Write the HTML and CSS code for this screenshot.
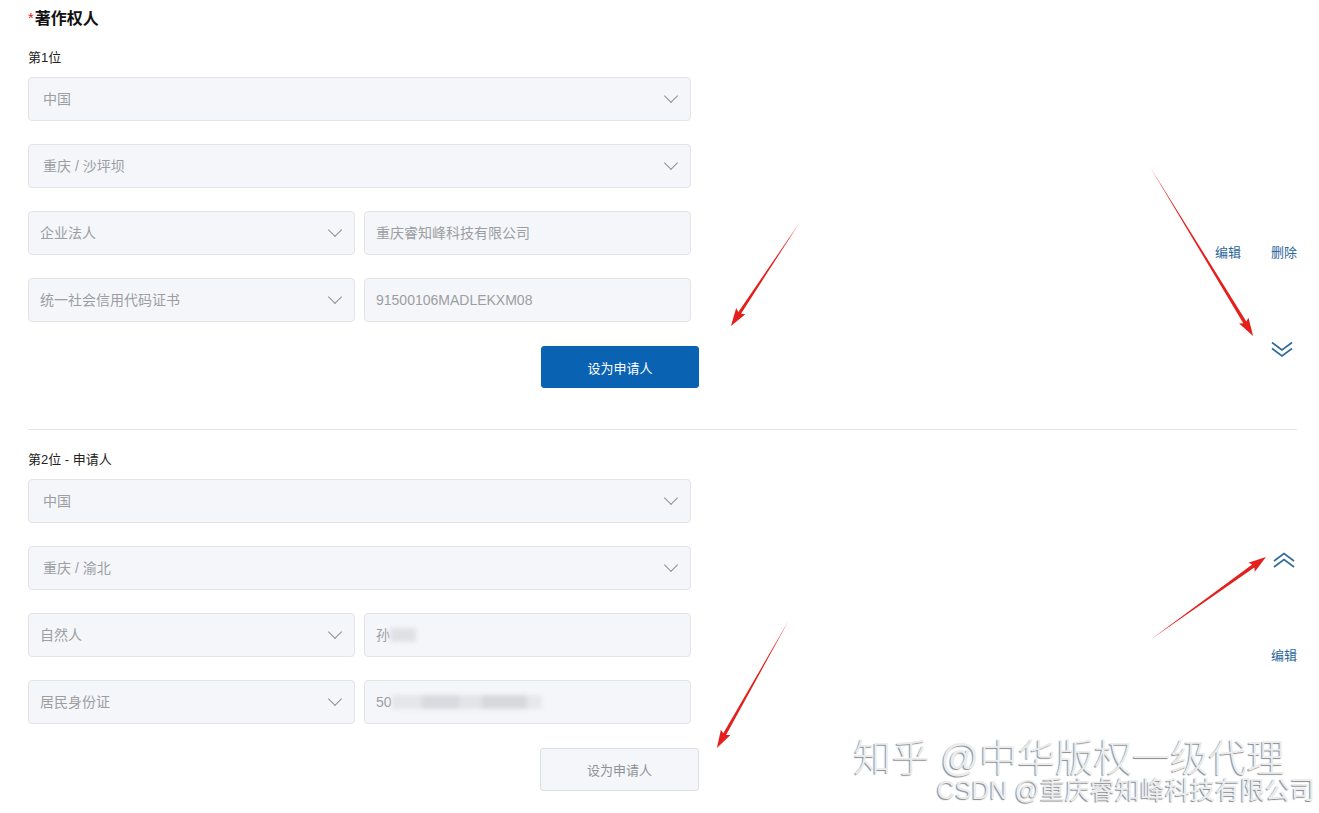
FILE: index.html
```html
<!DOCTYPE html>
<html lang="zh-CN">
<head>
    <meta charset="UTF-8">
    <title>著作权人</title>
    <link rel="stylesheet" href="styles.css">
</head>
<body>
<div class="page">
    <h2 class="title"><span class="req">*</span>著作权人</h2>

    <!-- 第1位 -->
    <div class="owner">
        <div class="form-col">
            <div class="pos-label">第1位</div>
            <div class="field select">中国<i class="caret"></i></div>
            <div class="field select">重庆 / 沙坪坝<i class="caret"></i></div>
            <div class="row">
                <div class="field select half">企业法人<i class="caret"></i></div>
                <div class="field half">重庆睿知峰科技有限公司</div>
            </div>
            <div class="row">
                <div class="field select half">统一社会信用代码证书<i class="caret"></i></div>
                <div class="field half">91500106MADLEKXM08</div>
            </div>
            <div class="btn-line">
                <button class="apply-btn">设为申请人</button>
            </div>
        </div>
        <div class="side-col side-1">
            <div class="actions">
                <a>编辑</a>
                <a>删除</a>
            </div>
            <svg class="chev chev-down" width="22" height="17" viewBox="0 0 22 17">
                <polyline points="1,1.5 11,9 21,1.5" fill="none" stroke="#2f6b9c" stroke-width="1.6"/>
                <polyline points="1,7.5 11,15 21,7.5" fill="none" stroke="#2f6b9c" stroke-width="1.6"/>
            </svg>
        </div>
    </div>

    <!-- 第2位 -->
    <div class="owner second">
        <div class="form-col">
            <div class="pos-label">第2位 - 申请人</div>
            <div class="field select">中国<i class="caret"></i></div>
            <div class="field select">重庆 / 渝北<i class="caret"></i></div>
            <div class="row">
                <div class="field select half">自然人<i class="caret"></i></div>
                <div class="field half">孙<span class="blur b1"></span></div>
            </div>
            <div class="row">
                <div class="field select half">居民身份证<i class="caret"></i></div>
                <div class="field half">50<span class="blur b2"></span></div>
            </div>
            <div class="btn-line">
                <button class="apply-btn disabled">设为申请人</button>
            </div>
        </div>
        <div class="side-col side-2">
            <svg class="chev chev-up" width="22" height="17" viewBox="0 0 22 17">
                <polyline points="1,9 11,1.5 21,9" fill="none" stroke="#2f6b9c" stroke-width="1.6"/>
                <polyline points="1,15 11,7.5 21,15" fill="none" stroke="#2f6b9c" stroke-width="1.6"/>
            </svg>
            <div class="actions">
                <a>编辑</a>
            </div>
        </div>
    </div>
</div>

<!-- 标注箭头 -->
<svg class="marks" width="1319" height="813" viewBox="0 0 1319 813">
    <g fill="#e4201c">
        <polygon transform="translate(800 222) rotate(123.6)" points="0,0 109,-1.6 107,-5.5 124.8,0 107,5.5 109,1.6"/>
        <polygon transform="translate(1150 167) rotate(58.6)" points="0,0 182,-1.8 180,-5.5 197.9,0 180,5.5 182,1.8"/>
        <polygon transform="translate(1150 640) rotate(-35.6)" points="0,0 127,-1.8 125,-5.5 142.6,0 125,5.5 127,1.8"/>
        <polygon transform="translate(789 620) rotate(119.4)" points="0,0 131,-1.6 129,-5.5 146.9,0 129,5.5 131,1.6"/>
    </g>
</svg>

<div class="watermark">
    <div class="wm-1">知乎 @中华版权一级代理</div>
    <div class="wm-2">CSDN @重庆睿知峰科技有限公司</div>
</div>
</body>
</html>
```

FILE: styles.css
```css
body {
    margin: 0;
    font-family: "Liberation Sans", "Noto Sans CJK SC", sans-serif;
    background: #fff;
    color: #222;
    position: relative;
    width: 1319px;
    height: 813px;
    overflow: hidden;
}
.page {
    padding: 0 22px 0 28px;
}
.title {
    margin: 0;
    padding-top: 9px;
    height: 20px;
    font-size: 16px;
    line-height: 20px;
    font-weight: bold;
    color: #111;
}
.title .req {
    color: #e0241c;
    font-size: 15px;
    line-height: 0;
    font-weight: normal;
    margin-right: 1px;
    vertical-align: 1px;
}
.owner {
    display: flex;
    padding-top: 19px;
    padding-bottom: 41px;
}
.owner.second {
    border-top: 1px solid #e5e6e9;
    padding-top: 20px;
    padding-bottom: 0;
}
.form-col {
    width: 671px;
}
.pos-label {
    font-size: 13px;
    line-height: 20px;
    margin-bottom: 9px;
    color: #222;
}
.field {
    position: relative;
    box-sizing: border-box;
    width: 663px;
    height: 44px;
    margin-bottom: 23px;
    padding-left: 14px;
    background: #f5f6f9;
    border: 1px solid #e2e4e9;
    border-radius: 4px;
    font-size: 14px;
    line-height: 43px;
    color: #9b9ea3;
}
.row {
    display: flex;
    gap: 9px;
    width: 663px;
}
.field.half {
    width: 327px;
    padding-left: 11px;
}
.caret {
    position: absolute;
    right: 14px;
    top: 13px;
    width: 9px;
    height: 9px;
    border-right: 1px solid #8d9096;
    border-bottom: 1px solid #8d9096;
    transform: rotate(45deg);
    transform-origin: center;
}
.blur {
    display: inline-block;
    height: 14px;
    vertical-align: -2px;
    background: #dfe1e5;
    filter: blur(2px);
}
.blur.b1 {
    width: 26px;
}
.blur.b2 {
    width: 150px;
    background: linear-gradient(90deg, #e4e6ea 0 20%, #d8dadf 20% 45%, #e2e4e8 45% 60%, #d6d8dc 60% 90%, #e6e8eb 90%);
}
.btn-line {
    display: flex;
    justify-content: flex-end;
    margin-top: 1px;
}
.apply-btn {
    width: 158px;
    height: 42px;
    border: 1px solid #0862b0;
    border-radius: 3px;
    background: #0a63b2;
    color: #fff;
    font-family: inherit;
    font-size: 13px;
    cursor: pointer;
}
.apply-btn.disabled {
    background: #f5f6f9;
    border-color: #dcdfe4;
    color: #8f9297;
    width: 159px;
    height: 43px;
}
.side-col {
    flex: 1;
    display: flex;
    flex-direction: column;
    align-items: flex-end;
}
.actions {
    display: flex;
    gap: 30px;
    font-size: 13px;
    line-height: 20px;
}
.actions a {
    color: #2b6699;
    cursor: pointer;
}
.side-1 {
    padding-top: 195px;
}
.side-1 .chev {
    margin-top: 78px;
    margin-right: 4px;
}
.side-2 {
    padding-top: 102px;
}
.side-2 .chev {
    margin-right: 2px;
    margin-bottom: 77px;
}
.marks {
    position: absolute;
    left: 0;
    top: 0;
    pointer-events: none;
}
.watermark {
    position: absolute;
    right: 6px;
    top: 736px;
    text-align: right;
    pointer-events: none;
    color: #ececec;
    text-shadow: -1px 1px 1px #8a8a8a, 1px -1px 0 #fff;
}
.wm-1 {
    font-size: 38px;
    line-height: 44px;
    font-weight: 300;
    margin-right: 28px;
    letter-spacing: 0.2px;
}
.wm-2 {
    font-size: 25px;
    line-height: 28px;
    margin-top: -4px;
    margin-right: -2px;
}
```
